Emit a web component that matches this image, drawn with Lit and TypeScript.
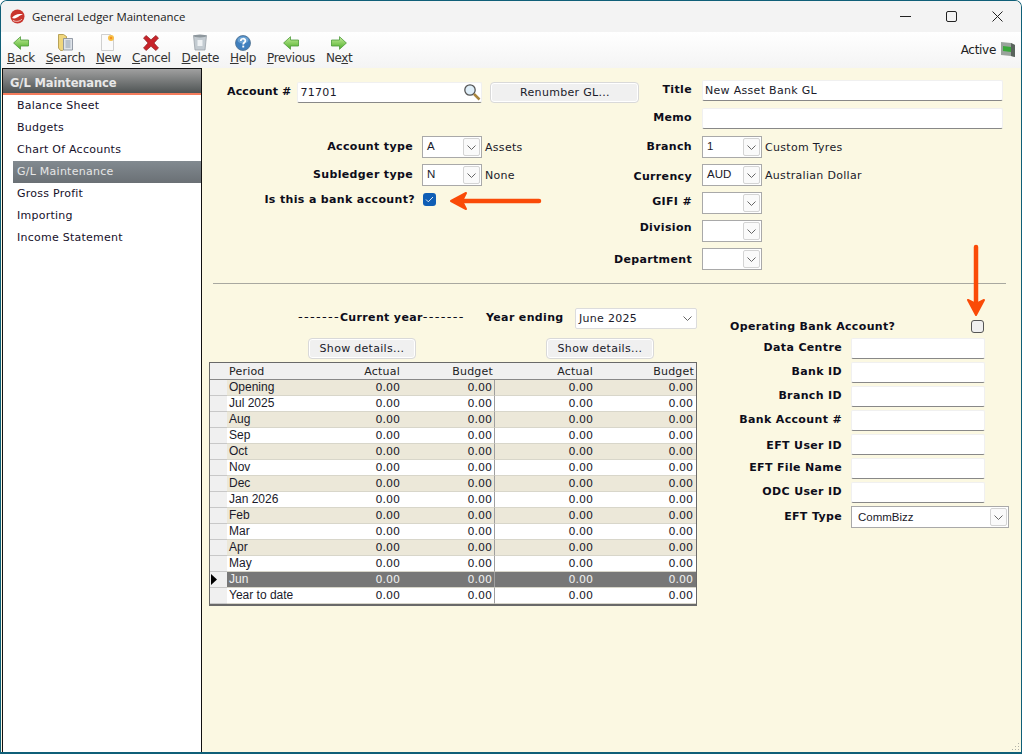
import { LitElement, html, css, svg } from "lit";
import { customElement } from "lit/decorators.js";

const tools = [
  ["B", "ack", "back"], ["S", "earch", "search"], ["N", "ew", "new"], ["C", "ancel", "cancel"],
  ["D", "elete", "delete"], ["H", "elp", "help"], ["P", "revious", "prev"], ["Ne", "xt", "next"],
];
const menu = ["Balance Sheet", "Budgets", "Chart Of Accounts", "G/L Maintenance", "Gross Profit", "Importing", "Income Statement"];
const periods = ["Opening", "Jul 2025", "Aug", "Sep", "Oct", "Nov", "Dec", "Jan 2026", "Feb", "Mar", "Apr", "May", "Jun", "Year to date"];
const bankFields = ["Data Centre", "Bank ID", "Branch ID", "Bank Account #", "EFT User ID", "EFT File Name", "ODC User ID"];

function icon(name: string) {
  switch (name) {
    case "back":
    case "prev":
      return svg`<svg width="16" height="14" viewBox="0 0 16 14"><defs><linearGradient id="gb" x1="0" y1="0" x2="0" y2="1"><stop offset="0" stop-color="#c4ee9a"/><stop offset="1" stop-color="#4fae2a"/></linearGradient></defs><path d="M.6 7 7.500.7V4h8v6h-8v3.300z" fill="url(#gb)" stroke="#4d9a3a" stroke-width=".8"/></svg>`;
    case "next":
      return svg`<svg width="16" height="14" viewBox="0 0 16 14"><defs><linearGradient id="gn" x1="0" y1="0" x2="0" y2="1"><stop offset="0" stop-color="#c4ee9a"/><stop offset="1" stop-color="#4fae2a"/></linearGradient></defs><path d="M15.400 7 8.500.7V4h-8v6h8v3.300z" fill="url(#gn)" stroke="#4d9a3a" stroke-width=".8"/></svg>`;
    case "search":
      return svg`<svg width="15" height="17" viewBox="0 0 15 17"><path d="M.5.5h5l3 2v11l-4 3H2.500L.5 14z" fill="#f0d67c" stroke="#a8913f" stroke-width=".8"/><path d="M5.500 4.500h9V16h-9z" fill="#dfe4ea" stroke="#7f8894" stroke-width=".8"/><path d="M7.500 6h5v8h-5z" fill="#b9c2cc"/></svg>`;
    case "new":
      return svg`<svg width="14" height="17" viewBox="0 0 14 17"><path d="M.5.5h9l3 3v13H.5z" fill="#fbfbfb" stroke="#c4c4c4" stroke-width=".8"/><circle cx="10" cy="4" r="3" fill="#f7c04a"/><circle cx="10" cy="4" r="1.200" fill="#f58f1e"/></svg>`;
    case "cancel":
      return svg`<svg width="16" height="16" viewBox="0 0 16 16"><path d="M3.200.5 8 4.800 12.800.5 15.500 3 11 8l4.500 5-2.700 2.500L8 11.200 3.200 15.500.5 13 5 8 .5 3z" fill="#c8232a" stroke="#8c2a2a" stroke-width=".7"/></svg>`;
    case "delete":
      return svg`<svg width="14" height="17" viewBox="0 0 14 17"><path d="M.5 1.500h13L12 16H2z" fill="#c3cbd1" stroke="#9aa2a8" stroke-width=".8"/><path d="M4.500 6h5v6h-5z" fill="#eef1f3"/><ellipse cx="7" cy="2" rx="6.500" ry="1.400" fill="#8e979d"/></svg>`;
    case "help":
      return svg`<svg width="16" height="16" viewBox="0 0 16 16"><circle cx="8" cy="8" r="7.500" fill="#3f7fbe" stroke="#51718f" stroke-width=".8"/><ellipse cx="8" cy="5" rx="5.500" ry="3.600" fill="#7fb0dc" opacity=".7"/><path d="M5.800 6c0-3 4.600-3 4.600-.2 0 1.700-2.200 1.700-2.200 3.600" fill="none" stroke="#fff" stroke-width="1.700"/><rect x="7.300" y="10.600" width="1.900" height="1.900" fill="#fff"/></svg>`;
  }
  return null;
}

@customElement("combo-box")
class ComboBox extends LitElement {
  static properties = { value: {}, wide: { type: Boolean, reflect: true } };
  declare value: string;
  declare wide: boolean;
  static styles = css`
    :host { display: flex; box-sizing: border-box; width: 60px; height: 22px; border: 1px solid #a9a9a9; background: #fff; align-items: center; font: 11.5px "Liberation Sans", sans-serif; letter-spacing: 0; color: #1a1a2a; padding-left: 4px; flex: none; }
    :host([wide]) { width: 158px; padding-left: 6px; }
    .v { flex: 1; margin-top: -2px; }
    :host([wide]) .v { margin-top: 0; }
    .b { box-sizing: border-box; width: 17px; height: 18px; margin-right: 1px; background: #fafafa; border: 1px solid #d4d4d4; border-radius: 2px; display: flex; align-items: center; justify-content: center; }
  `;
  render() {
    return html`<span class="v">${this.value}</span><span class="b"><svg width="9" height="5" viewBox="0 0 9 5"><path d="M.5.5l4 4 4-4" fill="none" stroke="#666"/></svg></span>`;
  }
}

@customElement("app-root")
export class AppRoot extends LitElement {
  static styles = css`
    :host { display: block; width: 1022px; height: 754px; background: #fff; font: 11px "DejaVu Sans", sans-serif; color: #0d0d1a; }
    .win { position: relative; box-sizing: border-box; width: 1022px; height: 754px; border: 1px solid #0f5f78; border-bottom-width: 2px; border-top-right-radius: 7px; border-top-left-radius: 7px; display: flex; flex-direction: column; overflow: hidden; background: #fbf8e2; }
    .title { height: 31px; flex: none; background: #f3f3f3; display: flex; align-items: center; padding-left: 9px; font: 11.4px "Open Sans", "Noto Sans", sans-serif; color: #1a1a1a; }
    .title svg.logo { margin-right: 7px; }
    .caps { margin-left: auto; margin-right: 1px; display: flex; align-items: center; }
    .caps span { width: 46px; height: 31px; display: flex; align-items: center; justify-content: center; }
    .tb { height: 36px; flex: none; background: linear-gradient(#ffffff, #f4f4f4); display: flex; padding-left: 6px; align-items: flex-start; }
    .tool { display: flex; flex-direction: column; align-items: center; margin-right: 11px; color: #333; font-size: 12px; font-family: "DejaVu Sans", sans-serif; letter-spacing: -.35px; }
    .tool .ic { height: 17px; margin-top: 2px; display: flex; align-items: center; }
    .tool .lb { line-height: 15px; }
    .tool u { text-underline-offset: 1px; }
    .active { margin-left: auto; margin-right: 5px; margin-top: 9px; display: flex; align-items: center; gap: 4px; font: 12px "DejaVu Sans", sans-serif; color: #222; letter-spacing: -.3px; }
    .main { flex: 1; display: flex; min-height: 0; }
    .side { box-sizing: border-box; width: 200px; flex: none; margin-left: 1px; background: #fff; border: 1px solid #111; border-bottom: 0; letter-spacing: .25px; }
    .side h3 { margin: 0; height: 26px; box-sizing: border-box; background: linear-gradient(#a0a0a0, #4f5454); border-bottom: 2px solid #f47c5c; color: #e8e8e8; font: bold 11.5px "DejaVu Sans", sans-serif; letter-spacing: -.13px; padding: 7px 0 0 7px; }
    .side a { display: block; height: 22px; line-height: 22px; padding-left: 4px; margin-left: 10px; font-size: 11px; color: #16102a; }
    .side a.on { background: linear-gradient(#828a90, #6a7075); color: #e6e6e6; }
    .form { flex: 1; min-width: 0; padding-top: 12px; letter-spacing: .3px; }
    .top { display: flex; height: 203px; }
    .lft { width: 410px; flex: none; }
    .rgt { flex: 1; }
    .row { display: flex; align-items: center; }
    .lab { font-weight: bold; text-align: right; white-space: nowrap; color: #0d0d1a; letter-spacing: .35px; }
    .note { margin-left: 3px; white-space: nowrap; color: #1a1a2a; }
    .acct { height: 22px; margin-top: 1px; padding-left: 25px; }
    .acct .lab { width: 65px; margin-right: 6px; margin-top: -2px; letter-spacing: .15px; }
    .inp { box-sizing: border-box; background: #fff; height: 21px; border: 1px solid #f0f0f0; border-bottom: 1px solid #888; border-radius: 2px; padding-left: 2px; line-height: 19px; font-size: 11px; color: #1a1a2a; flex: none; }
    .srch { width: 185px; display: flex; align-items: center; justify-content: space-between; }
    .btn { box-sizing: border-box; display: flex; align-items: center; justify-content: center; border: 1px solid #d9d9d9; border-radius: 4px; background: #f0f0f0; box-shadow: inset 0 0 0 1px #fff; font-size: 11px; color: #1a1a2a; flex: none; }
    .renum { width: 149px; height: 21px; margin-left: 8px; }
    .lrow { height: 22px; margin-bottom: 6px; }
    .lrow .lab { width: 211px; margin-right: 9px; margin-top: -2px; }
    .types { margin-top: 33px; }
    .bankq { height: 14px; margin-top: 5px; }
    .bankq .lab { width: 203px; margin-right: 8px; margin-left: 10px; }
    .cb { box-sizing: border-box; width: 13px; height: 13px; border-radius: 3px; background: #0f5eb5; display: flex; align-items: center; justify-content: center; flex: none; }
    .cb.off { background: #f0f0f0; border: 1px solid #555; }
    .rrow { height: 21px; margin-bottom: 7px; }
    .rrow .lab, .rsel .lab { width: 80px; margin-right: 10px; flex: none; margin-top: -2px; }
    .rrow .inp { width: 301px; }
    .rsel { height: 22px; margin-bottom: 6px; }
    .rsel .lblc { margin-top: 2px; }
    .rsel .lblg { margin-top: -3px; }
    .rsel .lblu { margin-top: -8px; }
    .rsel .lbld { margin-top: 0; }
    hr { border: 0; border-top: 1px solid #a8a8a0; margin: 0 15px 0 11px; }
    .low { display: flex; padding-top: 23px; }
    .ledger { width: 488px; margin-left: 7px; flex: none; }
    .yr { height: 22px; display: flex; align-items: center; }
    .cy { width: 168px; margin-left: 89px; font-weight: bold; white-space: nowrap; letter-spacing: .35px; margin-top: -3px; }
    .dash { font-weight: normal; font-size: 13px; letter-spacing: 1.3px; }
    .ye { box-sizing: border-box; width: 78px; font-weight: bold; margin-left: 20px; margin-right: 11px; letter-spacing: .35px; white-space: nowrap; margin-top: -2px; }
    .yrsel { box-sizing: border-box; width: 122px; height: 21px; flex: none; background: #fff; border: 1px solid #dcdcdc; border-radius: 2px; display: flex; align-items: center; justify-content: space-between; padding: 0 4px 0 3px; font-size: 11px; color: #1a1a2a; }
    .shows { display: flex; height: 22px; margin-top: 9px; }
    .shows .btn { width: 108px; height: 21px; }
    .s1 { margin-left: 99px; }
    .s2 { margin-left: 130px; }
    .grid { box-sizing: border-box; margin-top: 2px; border: 1px solid #696969; border-bottom-width: 2px; background: #fff; display: grid; grid-template-columns: 17px 76px 98px 94px 100px 101px; font-size: 11px; letter-spacing: 0; }
    .grid > div { box-sizing: border-box; height: 16px; line-height: 15px; white-space: nowrap; }
    .grid .h { height: 17px; background: #f0f0f0; border-bottom: 1px solid #888; color: #222; line-height: 17px; letter-spacing: .2px; }
    .n { text-align: right; padding-right: 1px; }
    .n2 { padding-right: 2px; }
    .n3 { padding-right: 3px; }
    .p { font-family: "Liberation Sans", sans-serif; font-size: 12px; padding-left: 2px; color: #1a1a2a; }
    .grid .h.p { font-family: "DejaVu Sans", sans-serif; font-size: 11px; }
    .sel { background: #f0f0f0; border-bottom: 1px solid #c8c8c8; display: flex; align-items: center; }
    .c { border-bottom: 1px solid #d8d6ca; color: #1a1a2a; }
    .alt { background: #ece8d9; }
    .cur { background: #777; color: #f0f0f0; }
    .vl { border-right: 1px solid #a0a0a0; }
    .bank { margin-left: 33px; width: 254px; }
    .op { height: 16px; margin-top: 11px; display: flex; align-items: center; justify-content: space-between; font-weight: bold; letter-spacing: .35px; white-space: nowrap; }
    .bankrows { margin-top: 4px; }
    .brow { display: flex; align-items: center; height: 21px; margin-bottom: 3px; }
    .brow .lab { width: 112px; margin-right: 9px; flex: none; margin-top: -3px; }
    .brow .lab.eftu { margin-top: 1px; }
    .brow .inp { width: 134px; }
    .brow.sel2 { height: 22px; margin-top: 1px; }
    .brow.sel2 .lab { margin-top: -2px; }
    .arrows { position: absolute; left: 0; top: 0; pointer-events: none; }
    .grip { position: absolute; right: 1px; bottom: 1px; }
  `;

  render() {
    return html`
      <div class="win">
        <div class="title">
          <svg class="logo" width="15" height="15" viewBox="0 0 15 15"><circle cx="7.500" cy="7.500" r="7" fill="#c9362e"/><path d="M2 9c3-4 7-4.500 11-3.500-3 .5-4 2-6 3s-3 1.200-5 .5z" fill="#fff"/><path d="M3 11.500c3 1.500 7 1 9-1.500" fill="none" stroke="#f2c8c0" stroke-width="1"/></svg>
          General Ledger Maintenance
          <div class="caps">
            <span><svg width="11" height="1"><rect width="11" height="1" fill="#222"/></svg></span>
            <span><svg width="11" height="11"><rect x=".5" y=".5" width="10" height="10" rx="1.500" fill="none" stroke="#222"/></svg></span>
            <span><svg width="11" height="11"><path d="M.5.5l10 10M10.500.5l-10 10" stroke="#222"/></svg></span>
          </div>
        </div>
        <div class="tb">
          ${tools.map(([a, b, ic]) => html`<div class="tool"><div class="ic">${icon(ic)}</div><div class="lb">${a === "Ne" ? html`Ne<u>x</u>t` : html`<u>${a}</u>${b}`}</div></div>`)}
          <div class="active">Active
            <svg width="16" height="17" viewBox="0 0 16 17"><path d="M1 1l10 1 4 2v12l-4-1-10-1z" fill="#9aa39c"/><path d="M3 5l8 1v5l-8-1z" fill="#3aa83a"/><path d="M11 2l4 2v12l-4-1z" fill="#59635c"/></svg>
          </div>
        </div>
        <div class="main">
          <nav class="side">
            <h3>G/L Maintenance</h3>
            ${menu.map((m) => html`<a class=${m === "G/L Maintenance" ? "on" : ""}>${m}</a>`)}
          </nav>
          <div class="form">
            <div class="top">
              <div class="lft">
                <div class="row acct">
                  <span class="lab">Account #</span>
                  <div class="inp srch">71701
                    <svg width="18" height="18" viewBox="0 0 18 18"><circle cx="7" cy="7" r="5.200" fill="#dfeef8" stroke="#555" stroke-width="1.300"/><path d="M11 11l5.500 5.500" stroke="#a8843c" stroke-width="2.500"/></svg>
                  </div>
                  <div class="btn renum">Renumber GL...</div>
                </div>
                <div class="types">
                  <div class="row lrow"><span class="lab">Account type</span><combo-box value="A"></combo-box><span class="note">Assets</span></div>
                  <div class="row lrow"><span class="lab">Subledger type</span><combo-box value="N"></combo-box><span class="note">None</span></div>
                  <div class="row bankq"><span class="lab">Is this a bank account?</span>
                    <span class="cb"><svg width="9" height="7" viewBox="0 0 9 7"><path d="M1 3.500l2.300 2.300L8 1" fill="none" stroke="#dfeaf6"/></svg></span></div>
                </div>
              </div>
              <div class="rgt">
                <div class="row rrow"><span class="lab">Title</span><div class="inp">New Asset Bank GL</div></div>
                <div class="row rrow"><span class="lab">Memo</span><div class="inp"></div></div>
                <div class="row rsel"><span class="lab">Branch</span><combo-box value="1"></combo-box><span class="note">Custom Tyres</span></div>
                <div class="row rsel"><span class="lab lblc">Currency</span><combo-box value="AUD"></combo-box><span class="note">Australian Dollar</span></div>
                <div class="row rsel"><span class="lab lblg">GIFI #</span><combo-box value=""></combo-box></div>
                <div class="row rsel"><span class="lab lblu">Division</span><combo-box value=""></combo-box></div>
                <div class="row rsel"><span class="lab lbld">Department</span><combo-box value=""></combo-box></div>
              </div>
            </div>
            <hr />
            <div class="low">
              <div class="ledger">
                <div class="yr"><span class="cy"><span class="dash">-------</span>Current year<span class="dash">-------</span></span><span class="ye">Year ending</span>
                  <div class="yrsel">June 2025<svg width="9" height="5" viewBox="0 0 9 5"><path d="M.5.5l4 4 4-4" fill="none" stroke="#666"/></svg></div>
                </div>
                <div class="shows"><div class="btn s1">Show details...</div><div class="btn s2">Show details...</div></div>
                <div class="grid">
                  <div class="h"></div><div class="h p">Period</div><div class="h n">Actual</div><div class="h n n2">Budget</div><div class="h n n2">Actual</div><div class="h n n2">Budget</div>
                  ${periods.map((p, i) => {
                    const bg = p === "Jun" ? "cur" : i % 2 === 0 ? "alt" : "";
                    return html`<div class="sel">${p === "Jun" ? html`<svg width="8" height="11" viewBox="0 0 8 11"><path d="M1 0l6 5.500-6 5.500z" fill="#000"/></svg>` : ""}</div>
                      <div class="c p ${bg}">${p}</div>
                      <div class="c n ${bg}">0.00</div>
                      <div class="c n n2 vl ${bg}">0.00</div>
                      <div class="c n n2 ${bg}">0.00</div>
                      <div class="c n n3 ${bg}">0.00</div>`;
                  })}
                </div>
              </div>
              <div class="bank">
                <div class="op">Operating Bank Account?<span class="cb off"></span></div>
                <div class="bankrows">
                  ${bankFields.map((f) => html`<div class="brow"><span class="lab ${f === "EFT User ID" ? "eftu" : ""}">${f}</span><div class="inp"></div></div>`)}
                  <div class="brow sel2"><span class="lab">EFT Type</span><combo-box wide value="CommBizz"></combo-box></div>
                </div>
              </div>
            </div>
          </div>
        </div>
        <svg class="arrows" width="1022" height="754" viewBox="0 0 1022 754">
          <g transform="translate(-1 -1)" fill="#fa4b08" stroke="#fa4b08" stroke-linecap="round" stroke-linejoin="round">
            <path d="M539 201H458" stroke-width="4.500"/><path d="M451 201l15-8-4 8 4 8z" stroke-width="2"/>
            <path d="M976 247V308" stroke-width="4.500"/><path d="M976 315l-8-15 8 4 8-4z" stroke-width="2"/>
          </g>
        </svg>
        <svg class="grip" width="9" height="9" viewBox="0 0 9 9"><path d="M8 1v1H7V1zM8 4v1H7V4zM5 4v1H4V4zM8 7v1H7V7zM5 7v1H4V7zM2 7v1H1V7z" fill="#b0b0a8"/></svg>
      </div>
    `;
  }
}
